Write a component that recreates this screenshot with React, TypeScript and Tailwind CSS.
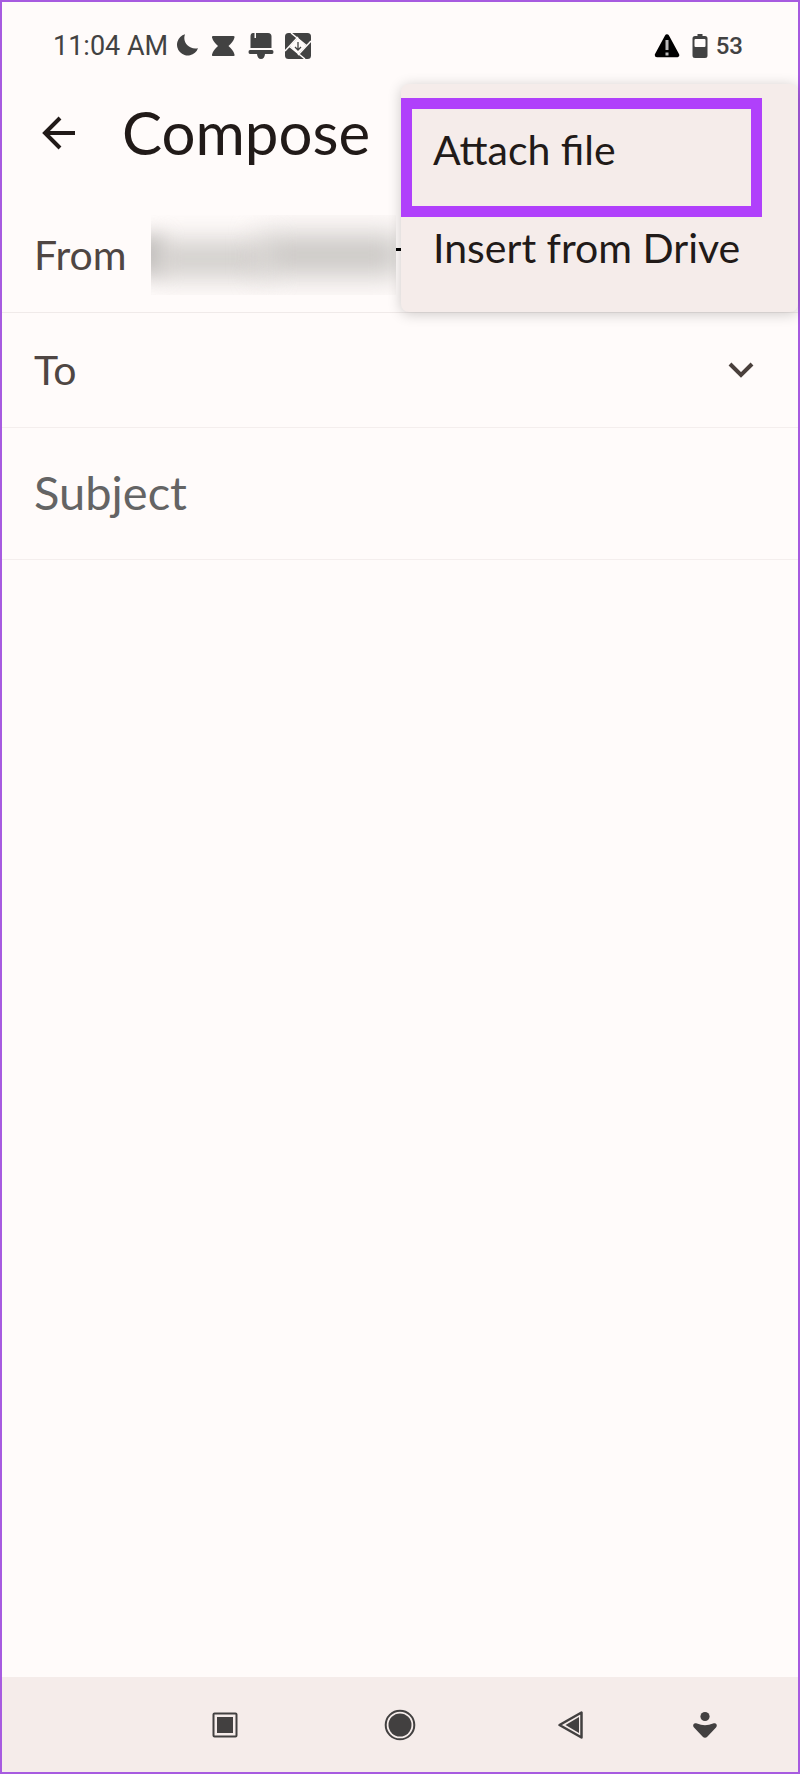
import { useState } from 'react';

const MENU_ITEMS = ['Attach file', 'Insert from Drive'];

function StatusBar() {
  return (
    <div className="flex h-[84px] items-center justify-between pl-[51px] pr-[55px] pt-1 font-[Roboto,sans-serif] leading-8 text-[#424242]">
      <div className="flex items-center">
        <span className="whitespace-nowrap text-[27px]">11:04 AM</span>
        <svg className="ml-2 h-[26px] w-[136px]" viewBox="0 0 136 26" fill="#424242" aria-hidden="true">
          {/* moon */}
          <path d="M9 1.2A10.800 10.800 0 1 0 22 15.200C13 17 6 9.500 9 1.200Z" />
          {/* hourglass */}
          <path d="M37 3h20.500q1.500 0 1 1.500c-1 3.500-3 5.500-6 8.500 3 2.500 5 5 6 8.500q.5 1.500-1 1.500H37q-1.500 0-1-1.500c1-3.500 3-6 6-8.500-3-3-5-5-6-8.500Q35.500 3 37 3Z" />
          {/* bell */}
          <path d="M77 0h1.500v5h1.500V0h12q3.500 0 3.500 3.500V15h-21V3.500Q74.500 0 77 0ZM74 17h22q1.500 0 1.500 2t-1.500 2h-7q-.5 5-4 5t-4-5h-7q-1.500 0-1.500-2t1.500-2Z" />
          {/* shutter */}
          <rect x="109" width="26" height="26" rx="3.500" />
          <path d="M122 5l8 8-8 8-8-8Z" fill="#fffbfa" />
          <path d="M115 0l16 13M135 8l-13 14M129 26l-16-13M109 18L122 4" stroke="#fffbfa" strokeWidth="1.500" fill="none" />
          <path d="M122 9v8M119 14l3 3 3-3" stroke="#424242" strokeWidth="1.300" fill="none" />
        </svg>
      </div>
      <div className="flex items-center">
        <svg className="h-6 w-[54px]" viewBox="0 0 54 24" aria-hidden="true">
          <path d="M13 2.500L23 21H3Z" fill="#000" stroke="#000" strokeWidth="4.500" strokeLinejoin="round" />
          <path d="M13 6v10M13 18.500v3" stroke="#bbb" strokeWidth="3" />
          <path d="M43.500 0h5v2h2.500q2.500 0 2.500 2.500v17q0 2.500-2.500 2.500H41q-2.500 0-2.500-2.500v-17Q38.500 2 41 2h2.500Z" fill="#424242" />
          <rect x="40.500" y="5" width="11" height="8" rx="1" fill="#fffbfa" />
        </svg>
        <span className="ml-2 text-[24px] font-medium">53</span>
      </div>
    </div>
  );
}

function OverflowMenu() {
  return (
    <div className="absolute left-1/2 right-0 top-[82px] ml-px rounded-lg bg-[#f5ecea] pb-[15px] pt-[17px] shadow-[0_2px_14px_rgba(0,0,0,0.2)]" role="menu">
      {MENU_ITEMS.map((item) => (
        <button
          key={item}
          role="menuitem"
          className="flex h-[98px] w-full items-center whitespace-nowrap pl-8 text-left text-[41px] leading-[48px] text-[#211a18]"
        >
          {item}
        </button>
      ))}
      <span className="pointer-events-none absolute left-0 right-9 top-[14px] h-[119px] border-[11px] border-[#b040fb]" />
    </div>
  );
}

function NavBar() {
  return (
    <nav className="grid h-[95px] grid-cols-[175fr_172fr_134fr_109fr] items-center justify-items-start bg-[#f5ecea] pl-[26%] text-[#424040]">
      <button aria-label="Recent apps">
        <svg className="h-8 w-8" viewBox="0 0 32 32" fill="currentColor">
          <rect x="4.500" y="4.500" width="23" height="23" rx="1" fill="none" stroke="currentColor" strokeWidth="2" />
          <rect x="8" y="8" width="16" height="16" />
        </svg>
      </button>
      <button aria-label="Home">
        <svg className="h-8 w-8" viewBox="0 0 32 32" fill="currentColor">
          <circle cx="16" cy="16" r="14.300" fill="none" stroke="currentColor" strokeWidth="2" />
          <circle cx="16" cy="16" r="11.500" />
        </svg>
      </button>
      <button aria-label="Back">
        <svg className="h-8 w-8" viewBox="0 0 32 32" fill="currentColor" strokeLinejoin="round">
          <path d="M4.500 16L26.500 3.500v25Z" fill="none" stroke="currentColor" strokeWidth="2.500" />
          <path d="M10.500 16l13.500-8v16Z" />
        </svg>
      </button>
      <button aria-label="Accessibility">
        <svg className="h-8 w-8" viewBox="0 0 32 32" fill="currentColor">
          <circle cx="16" cy="7.500" r="4.600" />
          <path d="M8 14.500q8 3.500 16 0c3-1.300 5 1.500 3 4l-8.500 9q-2.500 2.500-5 0L5 18.500c-2-2.500 0-5.300 3-4Z" />
        </svg>
      </button>
    </nav>
  );
}

export default function App() {
  const [to, setTo] = useState('');
  const [subject, setSubject] = useState('');
  const [body, setBody] = useState('');

  return (
    <div className="relative flex min-h-screen flex-col border-2 border-[#a75be0] bg-[#fffbfa] font-[Lato,sans-serif]">
      <StatusBar />

      <header className="flex h-[92px] items-center pl-8">
        <button aria-label="Back" className="mr-11">
          <svg className="h-11 w-11" viewBox="0 0 44 44" fill="none" stroke="#211a18" strokeWidth="4">
            <path d="M41 23H11M26 8L11 23l15 15" />
          </svg>
        </button>
        <h1 className="text-[60px] leading-[64px] text-[#211a18]">Compose</h1>
      </header>

      <form className="flex flex-1 flex-col" onSubmit={(e) => e.preventDefault()}>
        <div className="flex h-[135px] items-center border-b border-[#f0eae9] pl-8 pt-5">
          <span className="w-[117px] text-[41px] leading-[48px] text-[#4f4643]">From</span>
          {/* hidden address */}
          <div className="flex h-[80px] w-[245px] items-center overflow-hidden">
            <div className="-ml-3 h-9 w-6 shrink-0 bg-[#b0adab] blur-[10px]" />
            <div className="-ml-3 mt-2 h-9 w-[118px] bg-[#cfccc9] blur-[14px]" />
            <div className="-ml-2 -mr-2 h-10 flex-1 bg-[#c8c5c2] blur-[15px]" />
          </div>
          <div className="mb-3 h-[3px] w-2 bg-black" />
        </div>

        <div className="flex h-[115px] items-center border-b border-[#f4eeed] pl-8 pr-9">
          <label htmlFor="to" className="text-[41px] leading-[48px] text-[#4f4643]">To</label>
          <input
            id="to"
            value={to}
            onChange={(e) => setTo(e.target.value)}
            className="ml-6 min-w-0 flex-1 bg-transparent text-[41px] leading-[48px] outline-none"
          />
          <button type="button" aria-label="Show Cc and Bcc">
            <svg className="h-11 w-11" viewBox="0 0 44 44" fill="none" stroke="#4a403c" strokeWidth="4">
              <path d="M12 16l11 11 11-11" />
            </svg>
          </button>
        </div>

        <div className="flex h-[132px] items-center border-b border-[#f4eeed] px-8 pb-1">
          <input
            aria-label="Subject"
            placeholder="Subject"
            value={subject}
            onChange={(e) => setSubject(e.target.value)}
            className="min-w-0 flex-1 bg-transparent text-[47px] leading-[56px] outline-none placeholder:text-[#646464]"
          />
        </div>

        <textarea
          aria-label="Message"
          value={body}
          onChange={(e) => setBody(e.target.value)}
          className="w-full flex-1 resize-none bg-transparent px-8 py-6 text-[41px] leading-[48px] outline-none"
        />
      </form>

      <NavBar />
      <OverflowMenu />
    </div>
  );
}
